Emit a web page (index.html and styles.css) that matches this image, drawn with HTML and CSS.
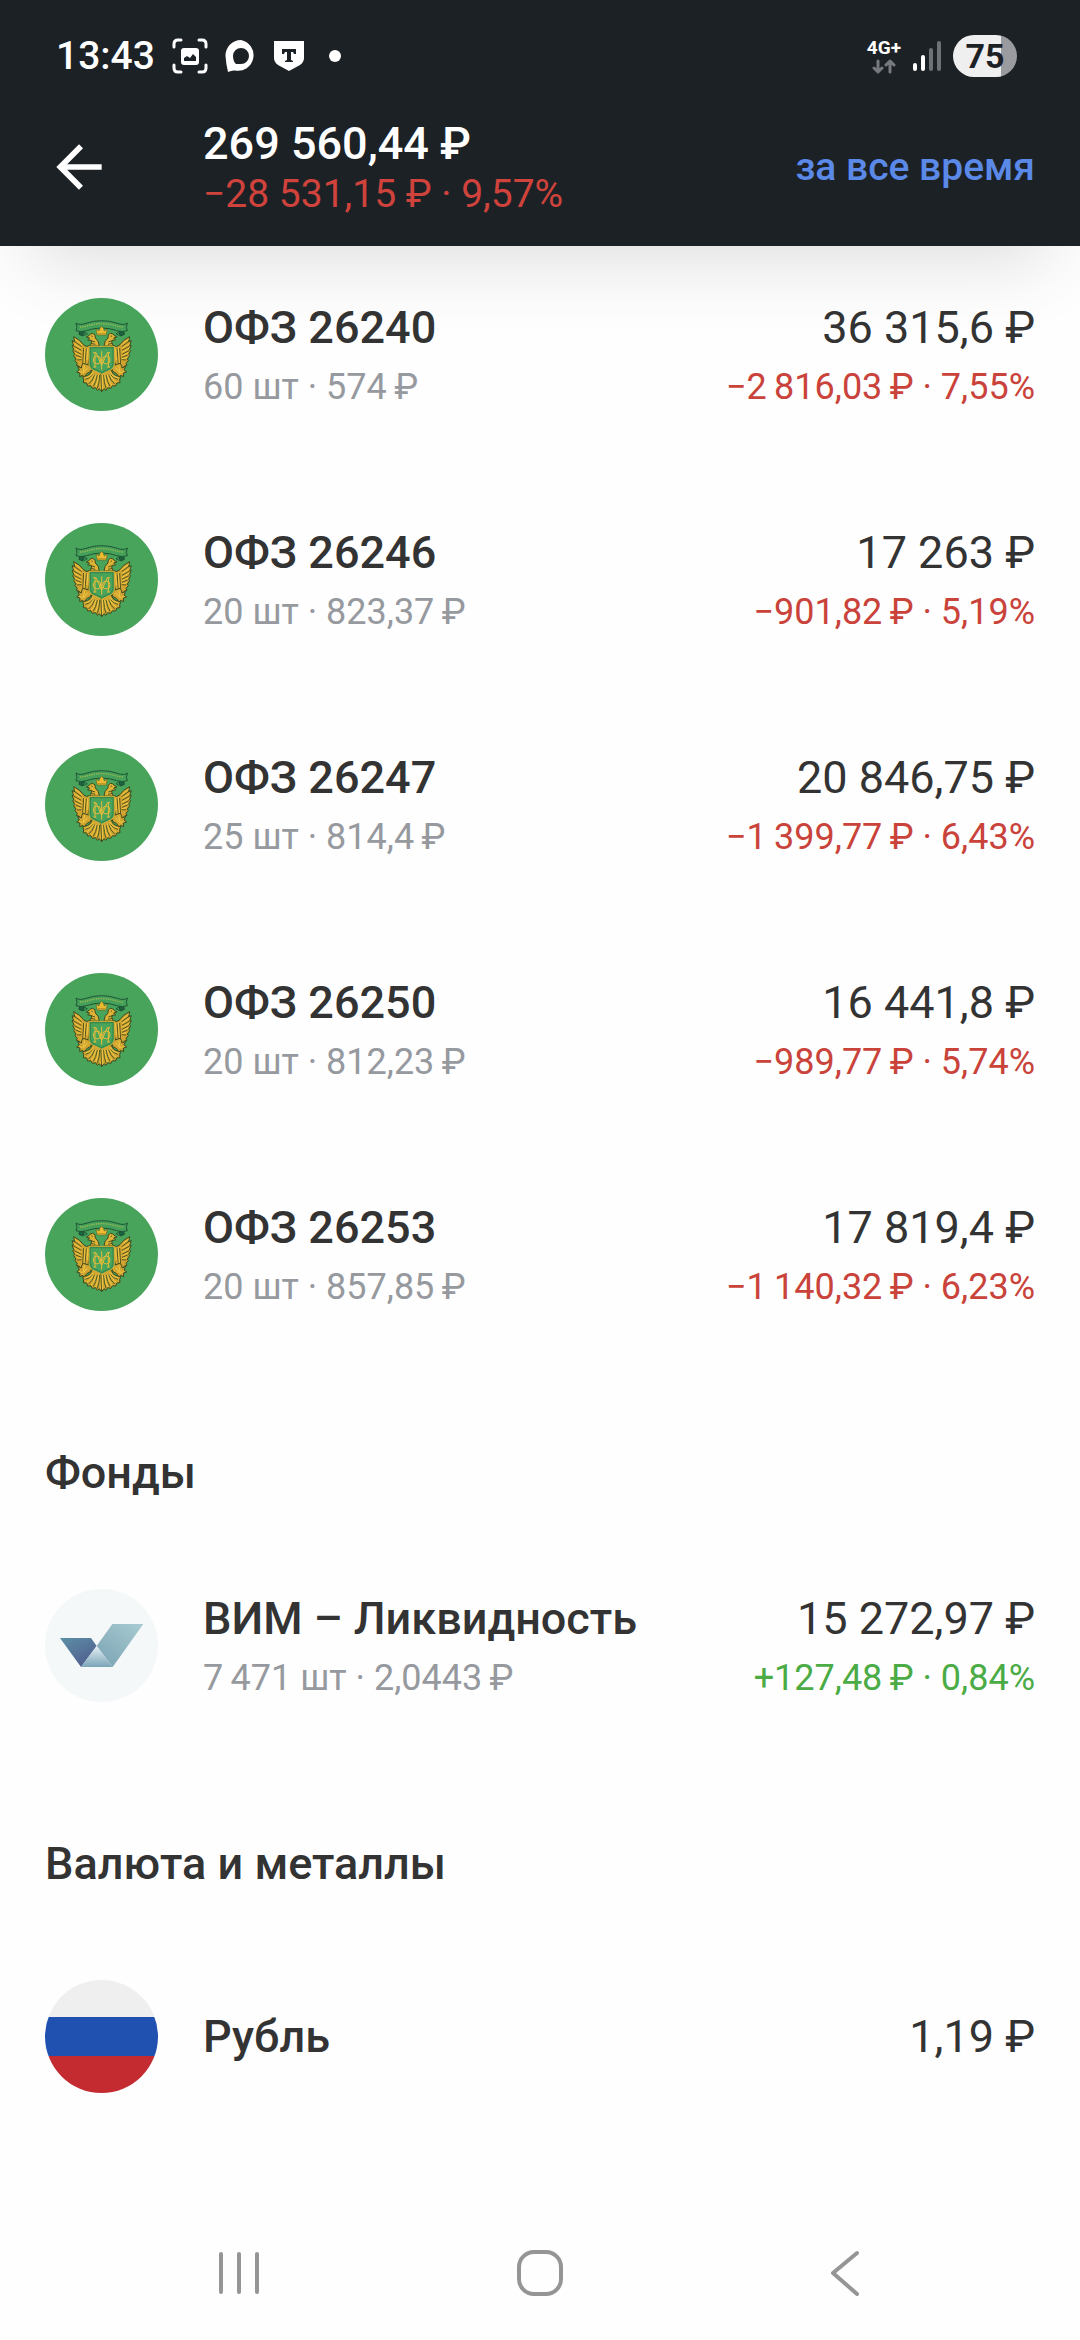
FILE: index.html
```html
<!DOCTYPE html>
<html lang="ru">
<head>
  <meta charset="UTF-8" />
  <meta name="viewport" content="width=device-width, initial-scale=1" />
  <title>Портфель</title>
  <link rel="stylesheet" href="styles.css">
</head>
<body>
  <!-- Shared emblem for the bond rows -->
  <svg class="sprite" aria-hidden="true">
    <symbol id="emblem" viewBox="45 54 339 339">
      <circle cx="214.500" cy="223.500" r="169.500" fill="#48a35b"/>
      <!-- ribbon -->
      <path d="M150 151l-3 12 11 5 5-10zM280 151l3 12-11 5-5-10z" fill="#1d6b43" stroke="#1c4a31" stroke-width="3"/>
      <path d="M138 129q10 8 30 1 22-8 47-8t47 8q20 7 30-1l-3 13 3 10q-14 6-32 0-22-8-45-8t-45 8q-18 6-32 0l3-10z" fill="#45a05a" stroke="#1f5536" stroke-width="3"/>
      <path d="M150 141q12 0 24-4 20-6 41-6t41 6q12 4 24 4" fill="none" stroke="#9db850" stroke-width="4" stroke-dasharray="4 3"/>
      <g id="wing">
        <!-- wing -->
        <path d="M182 196q-14 8-22-2-8-14-29-24l3 15-8-3 5 14-5 1 6 12-4 3 6 11-3 4 7 10-3 5 7 8-3 6 9 3 2 9 9-7 5 8 8-8 5-20z" fill="#d2a530" stroke="#3c4a20" stroke-width="3"/>
        <path d="M133 184l22 16M131 198l23 13M133 212l21 11M137 225l17 7M141 240l14-1M161 204l-3 52M169 205l-4 46" fill="none" stroke="#56541f" stroke-width="3"/>
        <path d="M134 177l22 18M131 191l23 14M133 205l21 12M136 219l18 8M140 233l14 3M165 204l-3 48M173 205l-2 35" fill="none" stroke="#f0c944" stroke-width="3"/>
        <!-- head and neck -->
        <path d="M208 198q-1-16-12-24 2-12-8-14-8 0-10 6l-9 5 10 3-6 6 11 1q3 6-4 17z" fill="#dfb436" stroke="#3c4a20" stroke-width="3"/>
        <path d="M184 168l4 1M183 182l12 4M182 190l14 3" stroke="#56541f" stroke-width="3"/>
        <path d="M160 154q-9 3-7 10 12 5 19-3-6-1-7-5z" fill="none" stroke="#1c5c3a" stroke-width="3"/>
        <!-- leg -->
        <path d="M160 250q-7 6-6 14l-11-5 5 11-8 6 10 3-1 11 9-4 5 6 7-11 11-6 7-16z" fill="#d2a530" stroke="#3c4a20" stroke-width="3"/>
        <path d="M164 256l-5 24M173 263l-12 15M147 274l9 4" stroke="#f0c944" stroke-width="3"/>
        <!-- tail feathers -->
        <path d="M186 270q-2 12-14 17l-14 3 3 9-1 9 10 1 3 9 10-1 4 8 10-2 5 8 6-5 7 9 3-65z" fill="#d2a530" stroke="#3c4a20" stroke-width="3"/>
        <path d="M188 284q-8 11-22 14M194 284q-6 19-18 28M202 285q-4 22-12 34M209 285q-1 26-7 40" fill="none" stroke="#4b5c25" stroke-width="3"/>
        <path d="M190 277q-6 14-24 17M191 284q-7 14-20 23M198 284q-5 20-14 33M206 285q-3 24-9 36M213 284v44" fill="none" stroke="#f0c944" stroke-width="3"/>
      </g>
      <use href="#wing" transform="translate(430 0) scale(-1 1)"/>
      <!-- crown -->
      <path d="M202 165l-4-18 9 6 3-8 5-6 5 6 3 8 9-6-4 18z" fill="#edbb32" stroke="#6c6921" stroke-width="2"/>
      <path d="M204 161h22" stroke="#9a802a" stroke-width="2"/>
      <!-- shield with monogram -->
      <path d="M177 199h76v54q0 15-20 21l-18 9-18-9q-20-6-20-21z" fill="#48a35b" stroke="#d9ad35" stroke-width="3"/>
      <path d="M181 203h68v49q0 12-18 18l-16 8-16-8q-18-6-18-18z" fill="none" stroke="#2b7340" stroke-width="2"/>
      <path d="M190 218h8l17 38 17-38h8M195 218v43M235 218v43M190 261h9M231 261h9M215 214v55" fill="none" stroke="#e8bd39" stroke-width="3"/>
      <ellipse cx="201" cy="240" rx="11" ry="12" fill="none" stroke="#e8bd39" stroke-width="3"/>
      <ellipse cx="229" cy="240" rx="11" ry="12" fill="none" stroke="#e8bd39" stroke-width="3"/>
    </symbol>
  </svg>

  <header class="header">
    <div class="status-bar">
      <div class="status-left">
        <time class="clock">13:43</time>
        <svg width="36" height="36" viewBox="0 0 36 36" fill="none" stroke="#fff" stroke-width="3" stroke-linecap="round">
          <path d="M2 9V6q0-4 4-4h3M27 2h3q4 0 4 4v3M34 27v3q0 4-4 4h-3M9 34H6q-4 0-4-4v-3"/>
          <rect x="9" y="10" width="18" height="17" rx="3" fill="#fff" stroke="none"/>
          <path d="M12 23v-3l3-2 3 2 3-4 3 3v4z" fill="#1c2126" stroke="none"/>
        </svg>
        <svg width="32" height="32" viewBox="0 0 32 32">
          <path fill="#fff" fill-rule="evenodd" d="M16 0a15.500 15.500 0 1 1-6 30.500Q7 30 3 32 1 24 .5 16A15.500 15.500 0 0 1 16 0zm0 8a8 8 0 0 0-8 8q0 5 3 8 2 0 5 0a8 8 0 0 0 0-16z"/>
        </svg>
        <svg width="30" height="30" viewBox="0 0 30 30">
          <path fill="#fff" d="M0 0h30v17q0 4-4 7l-11 6-11-6q-4-3-4-7z"/>
          <path fill="#1c2126" d="M8 8h14v5h-2l-1-2h-2v8l2 1v1h-8v-1l2-1v-8h-2l-1 2H8z"/>
        </svg>
        <span class="dot"></span>
      </div>
      <div class="status-right">
        <div class="network">
          <span>4G+</span>
          <svg width="24" height="15" viewBox="0 0 24 15" fill="none" stroke="#777b7f" stroke-width="3" stroke-linecap="round" stroke-linejoin="round">
            <path d="M6 2v11M2 9l4 4 4-4M18 13V2M14 6l4-4 4 4"/>
          </svg>
        </div>
        <svg class="signal" width="28" height="30" viewBox="0 0 28 30" stroke-width="4" stroke-linecap="round">
          <path d="M2 24v4M10 16v12" stroke="#fff"/>
          <path d="M18 9v19M26 2v26" stroke="#6e7276"/>
        </svg>
        <div class="battery">75</div>
      </div>
    </div>

    <div class="toolbar">
      <button class="back" type="button" aria-label="Назад">
        <svg width="68" height="68" viewBox="0 0 24 24" fill="#fff"><path d="M20 11H7.830l5.590-5.590L12 4l-8 8 8 8 1.410-1.410L7.830 13H20z"/></svg>
      </button>
      <div class="summary">
        <h1 class="total">269 560,44 ₽</h1>
        <p class="total-change">−28 531,15 ₽ · 9,57%</p>
      </div>
      <button class="period" type="button">за все время</button>
    </div>
  </header>

  <main class="portfolio">
    <ul class="assets">
      <li class="asset">
        <svg class="logo"><use href="#emblem"/></svg>
        <div class="info">
          <p class="name">ОФЗ 26240</p>
          <p class="detail">60 шт · 574&#8201;₽</p>
        </div>
        <div class="value">
          <p class="price">36 315,6 ₽</p>
          <p class="change down">−2&#8201;816,03&#8201;₽ · 7,55%</p>
        </div>
      </li>
      <li class="asset">
        <svg class="logo"><use href="#emblem"/></svg>
        <div class="info">
          <p class="name">ОФЗ 26246</p>
          <p class="detail">20 шт · 823,37&#8201;₽</p>
        </div>
        <div class="value">
          <p class="price">17 263 ₽</p>
          <p class="change down">−901,82&#8201;₽ · 5,19%</p>
        </div>
      </li>
      <li class="asset">
        <svg class="logo"><use href="#emblem"/></svg>
        <div class="info">
          <p class="name">ОФЗ 26247</p>
          <p class="detail">25 шт · 814,4&#8201;₽</p>
        </div>
        <div class="value">
          <p class="price">20 846,75 ₽</p>
          <p class="change down">−1&#8201;399,77&#8201;₽ · 6,43%</p>
        </div>
      </li>
      <li class="asset">
        <svg class="logo"><use href="#emblem"/></svg>
        <div class="info">
          <p class="name">ОФЗ 26250</p>
          <p class="detail">20 шт · 812,23&#8201;₽</p>
        </div>
        <div class="value">
          <p class="price">16 441,8 ₽</p>
          <p class="change down">−989,77&#8201;₽ · 5,74%</p>
        </div>
      </li>
      <li class="asset">
        <svg class="logo"><use href="#emblem"/></svg>
        <div class="info">
          <p class="name">ОФЗ 26253</p>
          <p class="detail">20 шт · 857,85&#8201;₽</p>
        </div>
        <div class="value">
          <p class="price">17 819,4 ₽</p>
          <p class="change down">−1&#8201;140,32&#8201;₽ · 6,23%</p>
        </div>
      </li>
    </ul>

    <h2 class="section-title">Фонды</h2>
    <ul class="assets">
      <li class="asset">
        <svg class="logo" viewBox="45 57 339 339">
          <defs>
            <linearGradient id="vim-left" x1="0" y1="0" x2="0.600" y2="1">
              <stop offset="0" stop-color="#5c8fa6"/><stop offset="1" stop-color="#51608f"/>
            </linearGradient>
            <linearGradient id="vim-right" x1="1" y1="0" x2="0.200" y2="1">
              <stop offset="0" stop-color="#a9ccd2"/><stop offset="1" stop-color="#7da5b5"/>
            </linearGradient>
            <linearGradient id="vim-mid" x1="0" y1="0" x2="0" y2="1">
              <stop offset="0" stop-color="#e6eff4"/><stop offset="1" stop-color="#7ba5b8"/>
            </linearGradient>
          </defs>
          <circle cx="214.500" cy="226.500" r="169.500" fill="#f4f8f9"/>
          <path d="M247 162h93l-92 129-48-63z" fill="url(#vim-right)"/>
          <path d="M90 204h93l17 24-47 63z" fill="url(#vim-left)"/>
          <path d="M200 228l48 63h-95z" fill="url(#vim-mid)"/>
        </svg>
        <div class="info">
          <p class="name">ВИМ – Ликвидность</p>
          <p class="detail">7&#8201;471 шт · 2,0443&#8201;₽</p>
        </div>
        <div class="value">
          <p class="price">15 272,97 ₽</p>
          <p class="change up">+127,48&#8201;₽ · 0,84%</p>
        </div>
      </li>
    </ul>

    <h2 class="section-title">Валюта и металлы</h2>
    <ul class="assets">
      <li class="asset">
        <span class="logo flag"></span>
        <div class="info">
          <p class="name">Рубль</p>
        </div>
        <div class="value">
          <p class="price">1,19 ₽</p>
        </div>
      </li>
    </ul>
  </main>

  <nav class="system-nav">
    <button type="button" aria-label="Недавние">
      <svg width="46" height="46" viewBox="0 0 46 46"><path d="M5 4v38M23 4v38M41 4v38"/></svg>
    </button>
    <button type="button" aria-label="Домой">
      <svg width="46" height="46" viewBox="0 0 46 46"><rect x="2" y="2" width="42" height="42" rx="15"/></svg>
    </button>
    <button type="button" aria-label="Назад">
      <svg width="46" height="46" viewBox="0 0 46 46"><path d="M39 3L15 23l24 21"/></svg>
    </button>
  </nav>
</body>
</html>
```
FILE: styles.css
```css
* { box-sizing: border-box; margin: 0; padding: 0; }

body {
  display: flex;
  flex-direction: column;
  min-height: 100vh;
  font-family: Roboto, sans-serif;
  font-size: 45px;
  color: #333;
  background: #fefefe;
}

button {
  font: inherit;
  color: inherit;
  background: none;
  border: none;
  cursor: pointer;
}

svg { display: block; }
ul { list-style: none; }

.sprite {
  position: absolute;
  width: 0;
  height: 0;
}

/* Header */
.header {
  color: #fff;
  background: #1c2126;
  box-shadow: 0 45px 75px -30px rgba(0, 0, 0, 0.13);
}

.status-bar {
  display: flex;
  justify-content: space-between;
  height: 88px;
  padding: 24px 63px 0 56px;
}

.status-left,
.status-right {
  display: flex;
  align-items: center;
}

.status-left { gap: 17px; }
.status-right { gap: 12px; }

.clock {
  font-size: 39px;
  font-weight: 500;
}

.dot {
  width: 12px;
  height: 12px;
  margin-left: 8px;
  border-radius: 50%;
  background: #fff;
}

.network {
  display: flex;
  flex-direction: column;
  align-items: center;
  gap: 2px;
  font-size: 19px;
  line-height: 18px;
  font-weight: 700;
}

.battery {
  width: 64px;
  height: 42px;
  border-radius: 21px;
  font-size: 34px;
  line-height: 42px;
  font-weight: 700;
  text-align: center;
  color: #1c2126;
  background: linear-gradient(to right, #efefef 75%, #999b9f 75%);
}

.toolbar {
  display: grid;
  grid-template-columns: 113px 1fr auto;
  align-items: center;
  column-gap: 45px;
  height: 158px;
  padding: 0 45px;
}

.total {
  font-size: 45px;
  line-height: 53px;
  font-weight: 500;
}

.total-change {
  font-size: 39px;
  line-height: 48px;
  color: #d0433c;
}

.period {
  font-size: 39px;
  font-weight: 500;
  color: #5b89e8;
}

/* Asset list */
.portfolio { flex: 1; }

.asset {
  display: flex;
  align-items: center;
  gap: 45px;
  height: 225px;
  padding: 0 45px;
}

.assets:first-child { margin-top: -4px; }

.logo {
  flex: none;
  width: 113px;
  height: 113px;
}

.flag {
  border-radius: 50%;
  background: linear-gradient(#efefef 33%, #2151b0 33%, #2151b0 67%, #c42b31 67%);
}

.info { flex: 1; }
.value { text-align: right; }

.name,
.price { line-height: 64px; }

.name { font-weight: 500; }

.detail,
.change {
  font-size: 36px;
  line-height: 54px;
}

.detail { color: #96999e; }
.down { color: #c9433b; }
.up { color: #4bab45; }

.section-title {
  height: 166px;
  padding: 79px 45px 0;
  font-size: 45px;
  line-height: 54px;
  font-weight: 500;
}

/* System navigation */
.system-nav {
  display: grid;
  grid-template-columns: repeat(3, 1fr);
  place-items: center;
  height: 135px;
  padding: 0 88px;
}

.system-nav svg {
  fill: none;
  stroke: #959595;
  stroke-width: 4;
  stroke-linecap: round;
  stroke-linejoin: round;
}
```
